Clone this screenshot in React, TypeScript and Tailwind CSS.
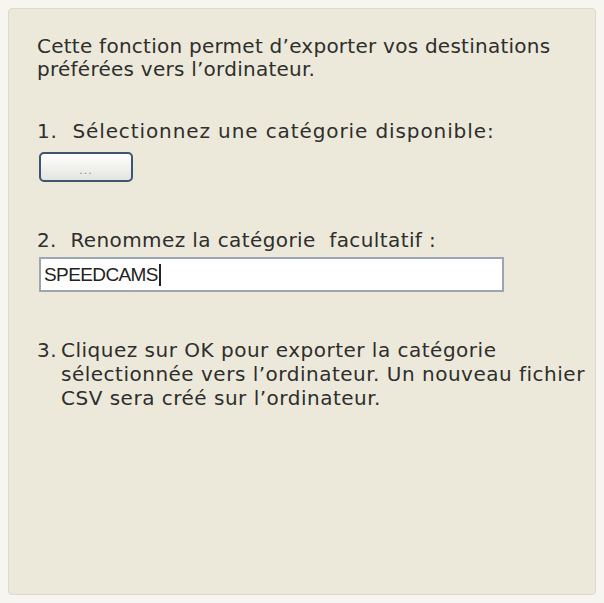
export default function App() {
  const font = { fontFamily: '"DejaVu Sans", "Liberation Sans", Arial, sans-serif' };
  const inputFont = { fontFamily: '"Liberation Sans", Arial, sans-serif' };
  return (
    <div className="w-[604px] h-[603px] bg-[#f6f5f0] p-[8px]" style={font}>
      <div className="w-full h-full rounded-[4px] border border-[#dcd9cc] bg-[#ece9da] pl-[28px] pr-[10px] pt-[26px] text-[20px] leading-[23px] text-[#2e2e2e] tracking-[0.25px] whitespace-nowrap">
        <p>
          Cette fonction permet d’exporter vos destinations
          <br />
          préférées vers l’ordinateur.
        </p>

        <p className="mt-[39px] tracking-[0.9px]">1.&nbsp; Sélectionnez une catégorie disponible:</p>
        <div className="mt-[9px] ml-[2px] flex h-[30px] w-[94px] items-end justify-center rounded-[5px] border-[2.5px] border-[#3d556e] bg-gradient-to-b from-[#ffffff] to-[#e4e4df] pb-[3px]">
          <span className="text-[11px] leading-[12px] text-[#8a8a8a] tracking-[1px]">...</span>
        </div>

        <p className="mt-[47px] tracking-[0.4px]">2.&nbsp; Renommez la catégorie&nbsp; facultatif :</p>
        <div className="mt-[5px] ml-[2px] flex h-[35px] w-[465px] items-center border-2 border-[#9aa6b2] bg-white pl-[3px]" style={inputFont}>
          <span className="text-[19px] leading-[22px] text-[#222] tracking-[-0.6px]">SPEEDCAMS</span>
          <span className="ml-[1px] h-[22px] w-[2px] bg-[#222]" />
        </div>

        <div className="mt-[46px] flex leading-[24px] tracking-[0.5px]">
          <span className="w-[24px] shrink-0">3.</span>
          <p>
            Cliquez sur OK pour exporter la catégorie
            <br />
            sélectionnée vers l’ordinateur. Un nouveau fichier
            <br />
            CSV sera créé sur l’ordinateur.
          </p>
        </div>
      </div>
    </div>
  );
}
